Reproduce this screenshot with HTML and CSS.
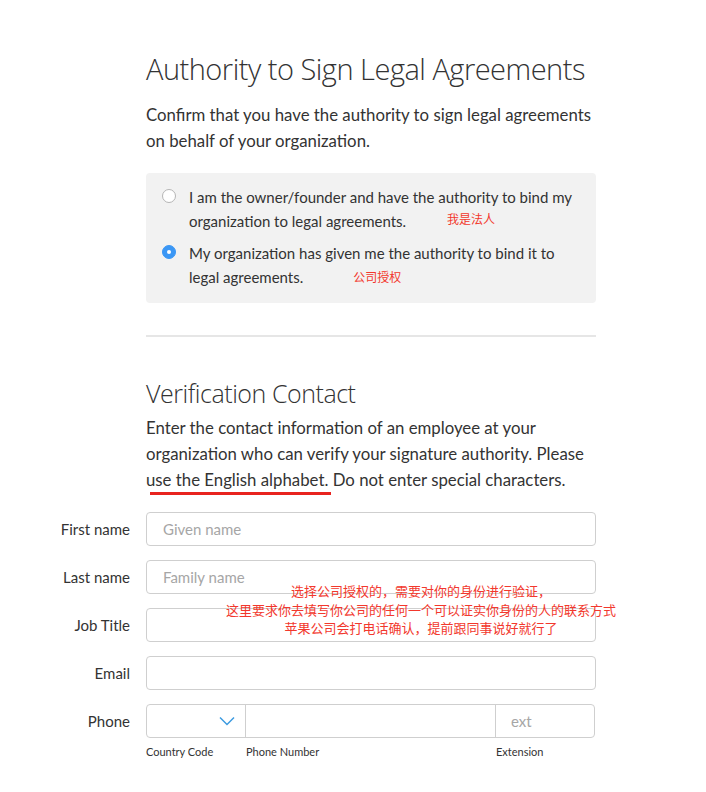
FILE: index.html
```html
<!DOCTYPE html>
<html>
<head>
<meta charset="utf-8">
<link rel="stylesheet" href="styles.css">
</head>
<body>
<div class="page">
  <section class="intro">
    <h1 class="title">Authority to Sign Legal Agreements</h1>
    <p class="lead">Confirm that you have the authority to sign legal agreements on behalf of your organization.</p>
    <div class="choices">
      <label class="choice">
        <span class="radio"></span>
        <span class="choice-text">I am the owner/founder and have the authority to bind my organization to legal agreements.<span class="note note-owner">我是法人</span></span>
      </label>
      <label class="choice">
        <span class="radio radio-on"></span>
        <span class="choice-text">My organization has given me the authority to bind it to legal agreements.<span class="note note-company">公司授权</span></span>
      </label>
    </div>
    <hr class="divider">
    <h2 class="subtitle">Verification Contact</h2>
    <p class="lead lead-tight">Enter the contact information of an employee at your organization who can verify your signature authority. Please <span class="marked">use the English alphabet.</span> Do not enter special characters.</p>
  </section>

  <div class="form">
    <div class="label">First name</div>
    <div class="field"><span class="ph">Given name</span></div>
    <div class="label">Last name</div>
    <div class="field"><span class="ph">Family name</span></div>
    <div class="label">Job Title</div>
    <div class="field"></div>
    <div class="label">Email</div>
    <div class="field"></div>
    <div class="label">Phone</div>
    <div class="phone">
      <div class="phone-row">
        <div class="seg seg-code">
          <svg class="chev" width="16" height="10" viewBox="0 0 16 10"><path d="M1 1.5 L8 8.5 L15 1.5" fill="none" stroke="#3d9be0" stroke-width="1.5"/></svg>
        </div>
        <div class="seg seg-num"></div>
        <div class="seg seg-ext"><span class="ph">ext</span></div>
      </div>
      <div class="phone-caps">
        <span class="cap cap-code">Country Code</span>
        <span class="cap cap-num">Phone Number</span>
        <span class="cap cap-ext">Extension</span>
      </div>
    </div>
    <div class="note note-block">选择公司授权的，需要对你的身份进行验证，<br>这里要求你去填写你公司的任何一个可以证实你身份的人的联系方式<br>苹果公司会打电话确认，提前跟同事说好就行了</div>
  </div>
</div>
</body>
</html>
```

FILE: styles.css
```css
html, body {
  margin: 0;
  padding: 0;
  background: #fff;
}
body {
  font-family: Lato, "Open Sans", sans-serif;
  color: #333;
}
.page {
  position: relative;
  width: 706px;
  padding-top: 49px;
}
.intro {
  margin-left: 146px;
  width: 450px;
}
.title {
  margin: 0;
  font-family: "Open Sans", sans-serif;
  font-size: 29px;
  font-weight: 300;
  line-height: 40px;
  letter-spacing: -0.5px;
  color: #333;
}
.lead {
  margin: 13px 0 0;
  font-size: 16.8px;
  line-height: 26px;
  color: #333;
}
.choices {
  margin-top: 19px;
  background: #f2f2f2;
  border-radius: 4px;
  padding: 12px 16px 14px 16px;
  display: flex;
  flex-direction: column;
  gap: 8px;
}
.choice {
  display: flex;
  gap: 13px;
  font-size: 15px;
  line-height: 24px;
  color: #333;
}
.radio {
  flex: none;
  width: 14px;
  height: 14px;
  margin-top: 4px;
  border-radius: 50%;
  border: 1px solid #b5b5b5;
  background: #fff;
  box-sizing: border-box;
  position: relative;
}
.radio-on {
  border-color: #3b97f5;
  background: #3b97f5;
}
.radio-on::after {
  content: "";
  position: absolute;
  left: 4px;
  top: 4px;
  width: 4px;
  height: 4px;
  border-radius: 50%;
  background: #fff;
}
.note {
  font-family: "Noto Sans CJK SC", sans-serif;
  color: #f2382d;
  font-size: 12px;
  line-height: 18px;
}
.note-owner {
  margin-left: 41px;
  position: relative;
  top: -3px;
}
.note-company {
  margin-left: 50px;
  position: relative;
  top: -1px;
}
.divider {
  margin: 32px 0 0;
  border: 0;
  border-top: 2px solid #e6e6e6;
}
.subtitle {
  margin: 38px 0 0;
  font-family: "Open Sans", sans-serif;
  font-size: 25px;
  font-weight: 300;
  line-height: 36px;
  letter-spacing: -0.45px;
  color: #333;
}
.lead-tight {
  margin-top: 4px;
}
.marked {
  position: relative;
}
.marked::after {
  content: "";
  position: absolute;
  left: 4px;
  right: -3px;
  bottom: -5px;
  height: 3px;
  background: #e8231f;
}
.form {
  position: relative;
  margin-top: 19px;
  display: grid;
  grid-template-columns: 130px 450px;
  column-gap: 16px;
  row-gap: 14px;
  align-items: start;
}
.label {
  text-align: right;
  font-size: 15px;
  line-height: 34px;
  color: #333;
}
.field {
  height: 34px;
  border: 1px solid #cfcfcf;
  border-radius: 4px;
  box-sizing: border-box;
  padding-left: 16px;
  display: flex;
  align-items: center;
}
.ph {
  font-size: 15px;
  color: #a6a6a6;
}
.phone-row {
  display: flex;
  height: 34px;
  border: 1px solid #cfcfcf;
  border-radius: 4px;
  box-sizing: border-box;
  width: 449px;
}
.seg {
  display: flex;
  align-items: center;
}
.seg-code {
  width: 99px;
  justify-content: flex-end;
  padding-right: 10px;
  box-sizing: border-box;
  border-right: 1px solid #cfcfcf;
}
.seg-num {
  width: 249px;
  border-right: 1px solid #cfcfcf;
}
.seg-ext {
  flex: 1;
  padding-left: 15px;
}
.phone-caps {
  display: flex;
  margin-top: 6px;
  font-size: 11px;
  line-height: 16px;
  color: #333;
}
.cap-code { width: 100px; }
.cap-num { width: 250px; }
.note-block {
  position: absolute;
  left: 190px;
  top: 70px;
  width: 462px;
  text-align: center;
  font-size: 13px;
  line-height: 18.5px;
}
```
